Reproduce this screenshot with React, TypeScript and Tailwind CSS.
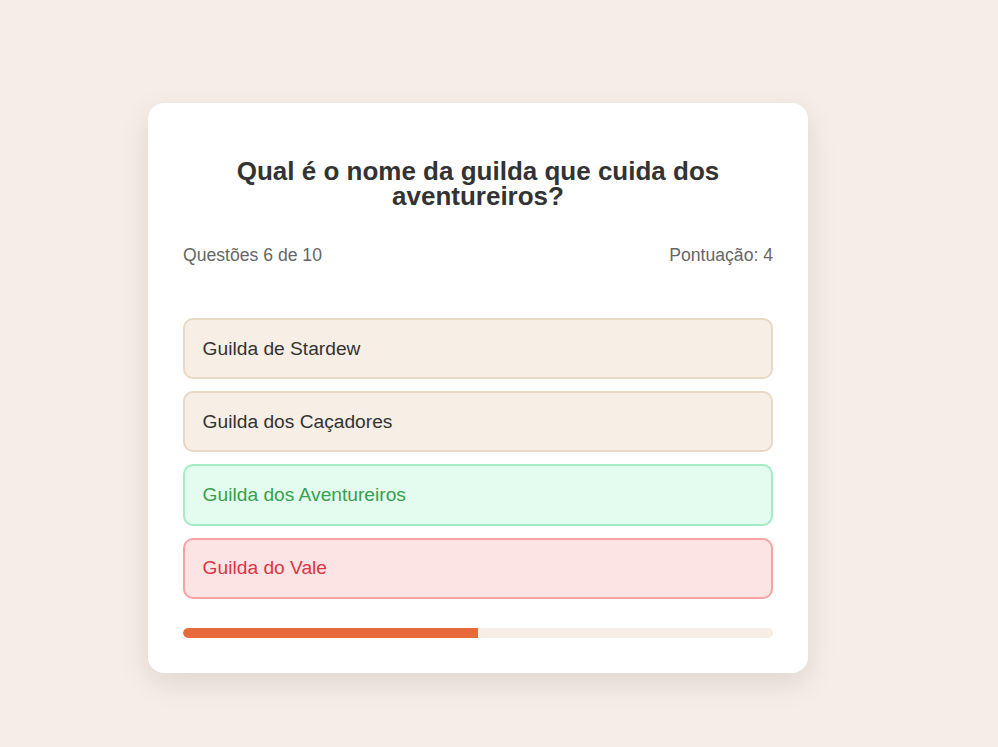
const options = [
  { label: "Guilda de Stardew", state: "idle" },
  { label: "Guilda dos Caçadores", state: "idle" },
  { label: "Guilda dos Aventureiros", state: "correct" },
  { label: "Guilda do Vale", state: "wrong" },
];

const optionStyles: Record<string, string> = {
  idle: "bg-[#f7eee5] border-[#e8d9c5] text-[#333333]",
  correct: "bg-[#e3fcef] border-[#a3ecc4] text-[#36a04c]",
  wrong: "bg-[#fde4e4] border-[#f5a3a3] text-[#dc3545]",
};

export default function App() {
  const current = 6;
  const total = 10;
  const progress = ((current - 1) / total) * 100;

  return (
    <div
      className="min-h-screen w-full bg-[#f6ede6] pt-[103px] pl-[148px]"
      style={{ fontFamily: '"Liberation Sans", Arial, sans-serif' }}
    >
      <div className="w-[660px] rounded-[16px] bg-white px-[35px] pt-[35px] pb-[35px] shadow-[0_10px_30px_rgba(0,0,0,0.1)]">
        <h2 className="mt-[21px] mb-[36px] text-center text-[26px] leading-[25px] font-bold text-[#333333]">
          Qual é o nome da guilda que cuida dos aventureiros?
        </h2>

        <div className="flex justify-between text-[17.6px] leading-[20px] text-[#666666]">
          <span>Questões {current} de {total}</span>
          <span>Pontuação: 4</span>
        </div>

        <div className="mt-[53px] flex flex-col gap-3">
          {options.map((opt, i) => (
            <button
              key={i}
              className={
                "rounded-[10px] border-2 p-[17.6px] text-left text-[19.2px] leading-[22px] " +
                optionStyles[opt.state]
              }
            >
              {opt.label}
            </button>
          ))}
        </div>

        <div className="mt-[29px] h-[10px] w-full overflow-hidden rounded-[5px] bg-[#f7eee5]">
          <div
            className="h-full rounded-l-[5px] bg-[#e66a3c]"
            style={{ width: `${progress}%` }}
          />
        </div>
      </div>
    </div>
  );
}
